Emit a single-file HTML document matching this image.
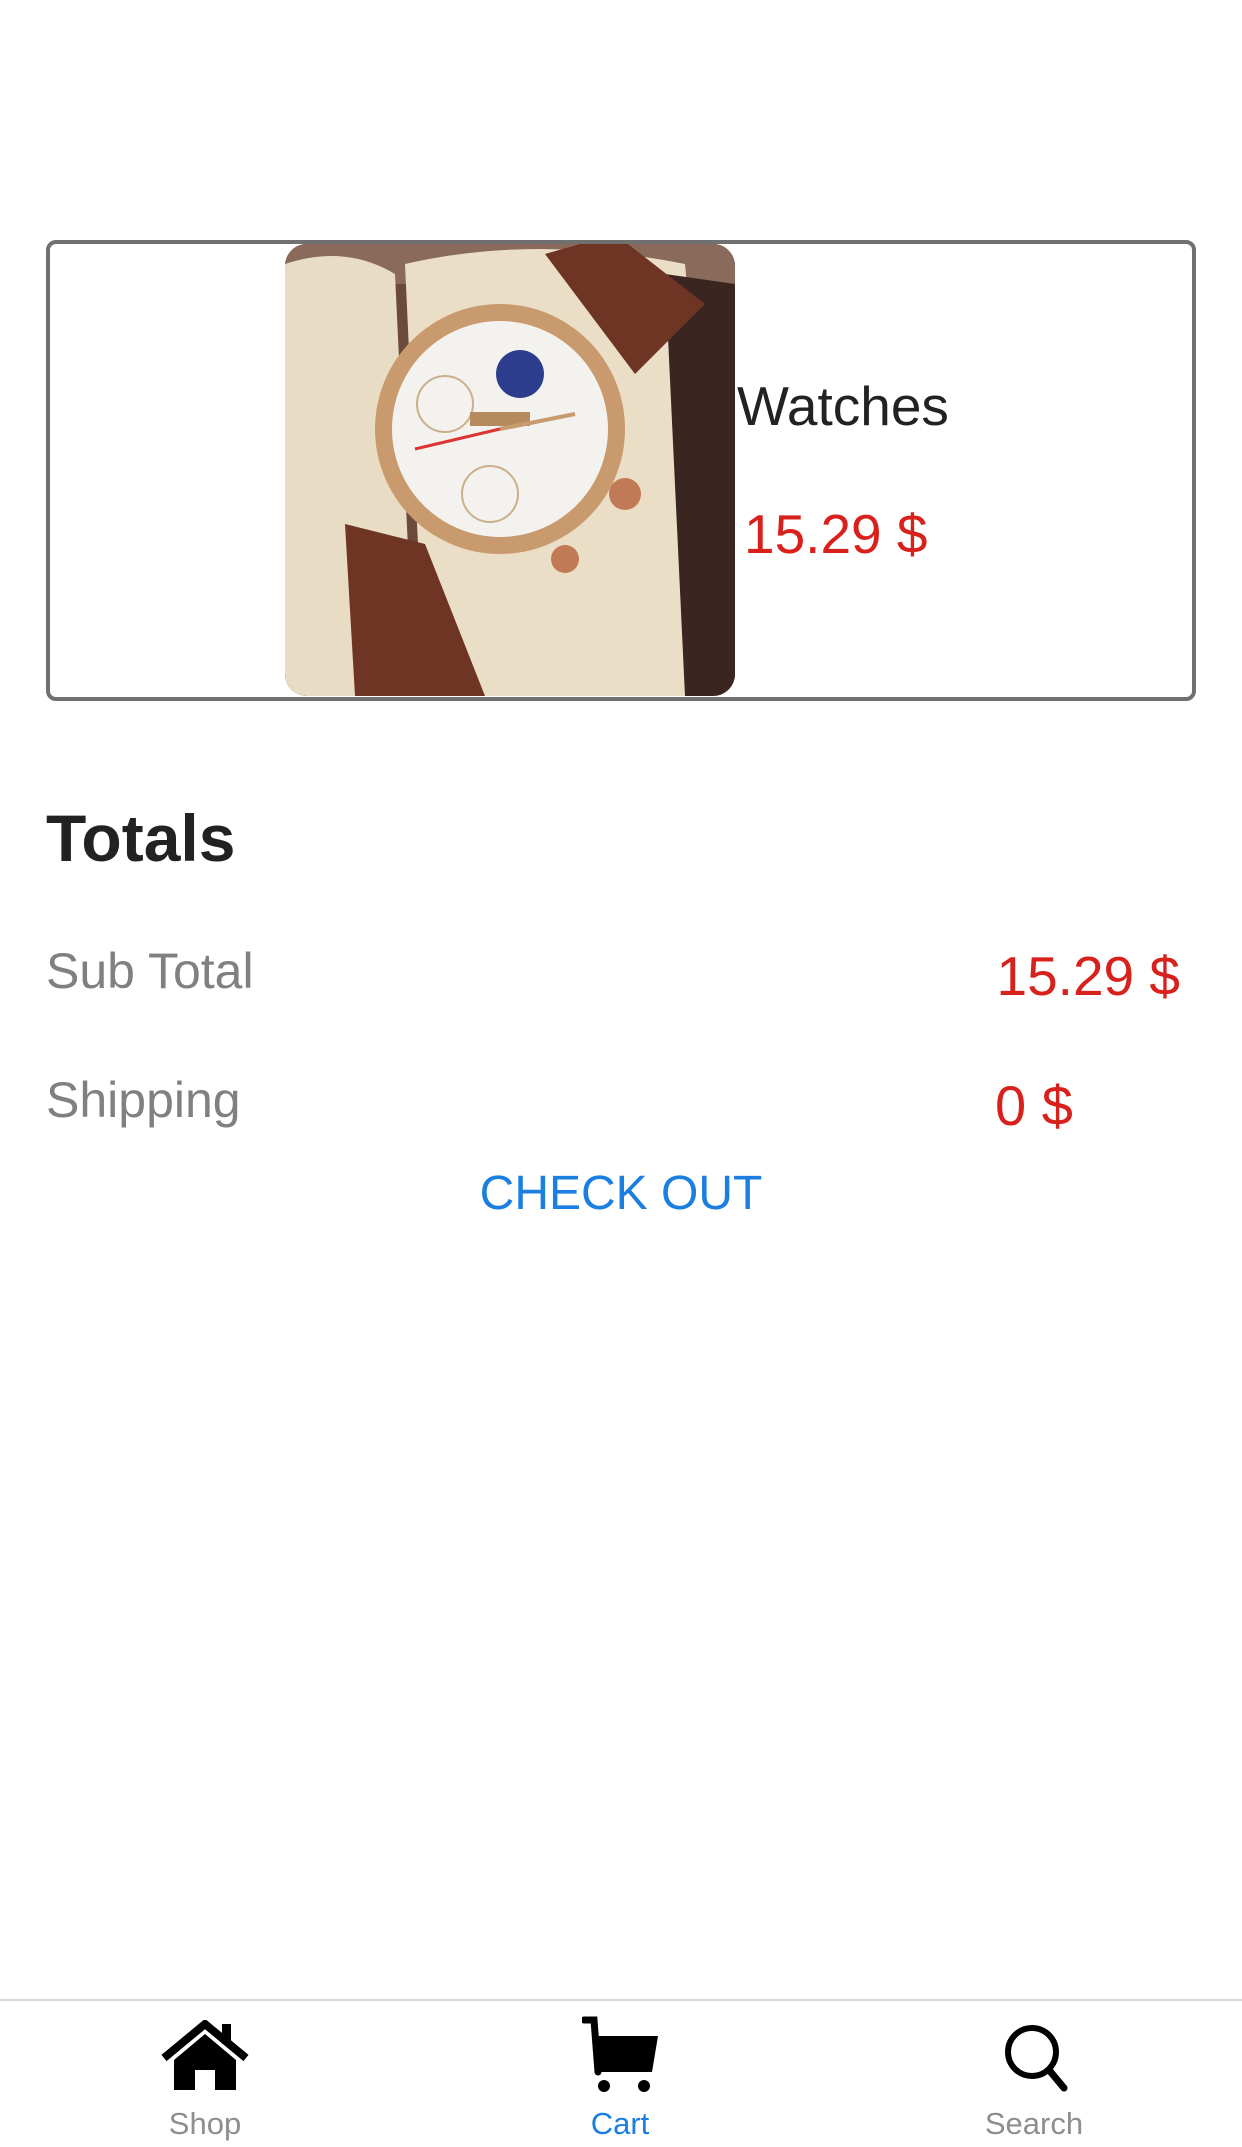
<!DOCTYPE html>
<html><head><meta charset="utf-8"><style>
html,body{margin:0;padding:0;background:#fff;}
body{width:1242px;height:2147px;position:relative;overflow:hidden;font-family:"Liberation Sans",sans-serif;}
.abs{position:absolute;white-space:nowrap;}
.card{position:absolute;left:46px;top:240px;width:1142px;height:453px;border:4px solid #707070;border-radius:10px;}
.img{position:absolute;left:285px;top:244px;width:450px;height:452px;border-radius:22px;overflow:hidden;background:#5a3a2e;}
</style></head><body>
<div class="card"></div>
<div class="img">
<svg width="450" height="452" viewBox="0 0 450 452">
<rect width="450" height="452" fill="#6b4a3c"/>
<rect x="0" y="0" width="450" height="40" fill="#8a6a5a"/>
<path d="M0 20 Q60 0 110 30 L130 452 L0 452Z" fill="#e9dcc4"/>
<path d="M120 20 Q250 -10 400 20 L440 452 L140 452Z" fill="#eadfc6"/>
<path d="M380 30 L450 40 L450 452 L400 452Z" fill="#3a2520"/>
<path d="M260 10 L330 -10 L420 60 L350 130Z" fill="#6e3424"/>
<path d="M60 280 L140 300 L200 452 L70 452Z" fill="#6e3424"/>
<circle cx="215" cy="185" r="125" fill="#c99a6e"/>
<circle cx="215" cy="185" r="108" fill="#f4f2ef"/>
<circle cx="160" cy="160" r="28" fill="none" stroke="#c9b08a" stroke-width="2"/>
<circle cx="205" cy="250" r="28" fill="none" stroke="#c9b08a" stroke-width="2"/>
<circle cx="235" cy="130" r="24" fill="#2b3d8c"/>
<rect x="185" y="168" width="60" height="14" fill="#b58a5c"/>
<line x1="215" y1="185" x2="290" y2="170" stroke="#c99a6e" stroke-width="4"/>
<line x1="215" y1="185" x2="130" y2="205" stroke="#d33" stroke-width="3"/>
<circle cx="340" cy="250" r="16" fill="#c07a55"/>
<circle cx="280" cy="315" r="14" fill="#c07a55"/>
</svg>
</div>
<div class="abs" style="left:737px;top:374px;font-size:55px;color:#222;">Watches</div>
<div class="abs" style="left:744px;top:502px;font-size:55px;color:#d8201c;">15.29 $</div>
<div class="abs" style="left:46px;top:800px;font-size:66px;font-weight:bold;color:#222;">Totals</div>
<div class="abs" style="left:46px;top:942px;font-size:50px;color:#808080;">Sub Total</div>
<div class="abs" style="right:62px;top:944px;font-size:55px;color:#d8201c;">15.29 $</div>
<div class="abs" style="left:46px;top:1071px;font-size:50px;color:#808080;">Shipping</div>
<div class="abs" style="left:995px;top:1073px;font-size:56px;color:#d8201c;">0 $</div>
<div class="abs" style="left:0;width:1242px;text-align:center;top:1166px;font-size:48px;color:#1a7fe0;">CHECK OUT</div>
<div style="position:absolute;left:0;top:1999px;width:1242px;height:2px;background:#d8d8d8;"></div>
<svg class="abs" style="left:160px;top:2020px" width="90" height="72" viewBox="0 0 90 72">
<path d="M4 38 L45 4 L86 38" fill="none" stroke="#000" stroke-width="8" stroke-linejoin="miter"/>
<rect x="62" y="4" width="9" height="20" fill="#000"/>
<path d="M14 40 L45 14 L76 40 L76 70 L55 70 L55 50 L35 50 L35 70 L14 70Z" fill="#000"/>
</svg>
<svg class="abs" style="left:582px;top:2014px" width="80" height="80" viewBox="0 0 80 80">
<path d="M2 6 L12 6 L16 58" fill="none" stroke="#000" stroke-width="7" stroke-linecap="round"/>
<path d="M12 22 L76 22 L70 58 L16 58Z" fill="#000"/>
<circle cx="22" cy="72" r="6" fill="#000"/><circle cx="62" cy="72" r="6" fill="#000"/>
</svg>
<svg class="abs" style="left:1002px;top:2022px" width="70" height="72" viewBox="0 0 70 72">
<circle cx="30" cy="30" r="24" fill="none" stroke="#000" stroke-width="6"/>
<line x1="47" y1="48" x2="62" y2="66" stroke="#000" stroke-width="7" stroke-linecap="round"/>
</svg>
<div class="abs" style="left:105px;width:200px;text-align:center;top:2106px;font-size:31px;color:#8e8e8e;">Shop</div>
<div class="abs" style="left:520px;width:200px;text-align:center;top:2106px;font-size:31px;color:#1a7fe0;">Cart</div>
<div class="abs" style="left:934px;width:200px;text-align:center;top:2106px;font-size:31px;color:#8e8e8e;">Search</div>
</body></html>
